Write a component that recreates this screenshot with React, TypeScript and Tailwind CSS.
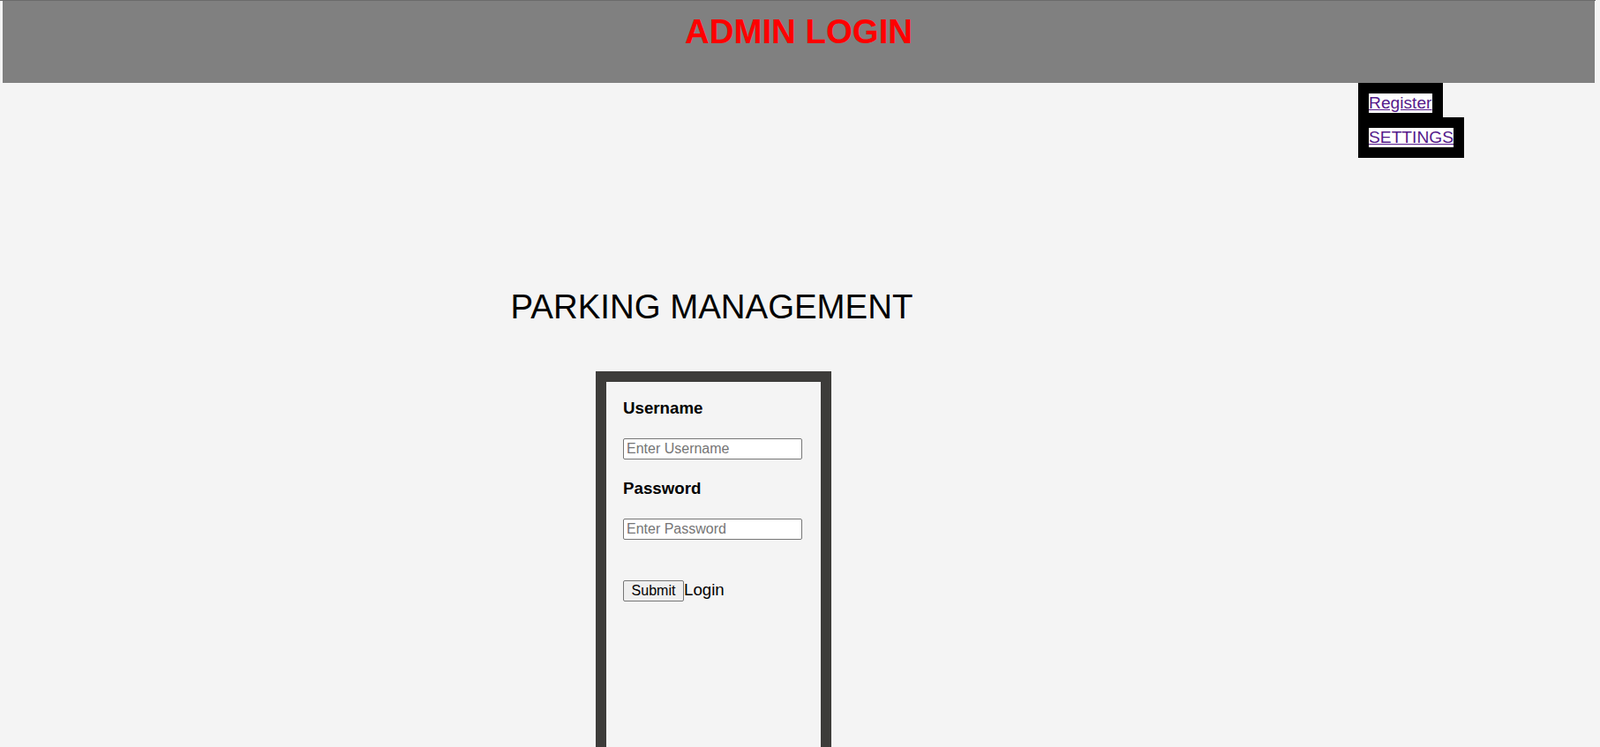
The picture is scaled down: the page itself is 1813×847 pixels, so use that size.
import React from "react";

export default function App() {
  return (
    <div
      className="h-[847px] bg-[#f4f4f4] overflow-hidden"
      style={{ fontFamily: '"Liberation Sans", Arial, sans-serif' }}
    >
      <div className="h-px w-[1808px] bg-[#6b6b6b]" />
      <header className="ml-[3px] w-[1804px] h-[93px] bg-[#808080] pt-[13px]">
        <h1 className="text-center text-[38.4px] leading-[43px] font-bold text-[#ff0000]">
          ADMIN LOGIN
        </h1>
      </header>

      <nav className="flex justify-end pr-[154px]">
        <ul className="flex flex-col items-start">
          <li className="bg-black pt-[12px] px-[12px] pb-[5px]">
            <a
              href="#"
              className="block bg-white text-[#551a8b] underline text-[19.2px] leading-[22px]"
            >
              Register
            </a>
          </li>
          <li className="bg-black p-[12px]">
            <a
              href="#"
              className="block bg-white text-[#551a8b] underline text-[19.2px] leading-[22px]"
            >
              SETTINGS
            </a>
          </li>
        </ul>
      </nav>

      <div className="w-[1617px] flex flex-col items-center">
        <h2 className="mt-[147px] pr-[4px] text-[38.4px] leading-[43px] font-normal text-black">
          PARKING MANAGEMENT
        </h2>

        <div className="mt-[52px] w-[267px] h-[500px] border-[12px] border-[#3d3c3a] bg-[#f4f4f4] pl-[20px]">
          <h3 className="mt-[19px] text-[18.72px] leading-[22px] font-bold text-black -ml-px">
            Username
          </h3>
          <input
            type="text"
            placeholder="Enter Username"
            className="block mt-[22.5px] w-[203px] h-[24px] border border-[#767676] rounded-[2px] bg-white pl-[3px] text-[16px] leading-[18px] placeholder:text-[#757575] outline-none -ml-px"
          />
          <h3 className="mt-[22.5px] text-[18.72px] leading-[22px] font-bold text-black -ml-px">
            Password
          </h3>
          <input
            type="password"
            placeholder="Enter Password"
            className="block mt-[22.5px] w-[203px] h-[24px] border border-[#767676] rounded-[2px] bg-white pl-[3px] text-[16px] leading-[18px] placeholder:text-[#757575] outline-none -ml-px"
          />
          <div className="mt-[46px] flex items-baseline -ml-px">
            <button
              type="button"
              className="w-[69px] h-[24px] border border-[#767676] rounded-[2px] bg-[#efefef] text-[16px] leading-[18px] text-black flex items-center justify-center"
            >
              Submit
            </button>
            <span className="text-[18.72px] leading-[22px] text-black">Login</span>
          </div>
        </div>
      </div>
    </div>
  );
}
